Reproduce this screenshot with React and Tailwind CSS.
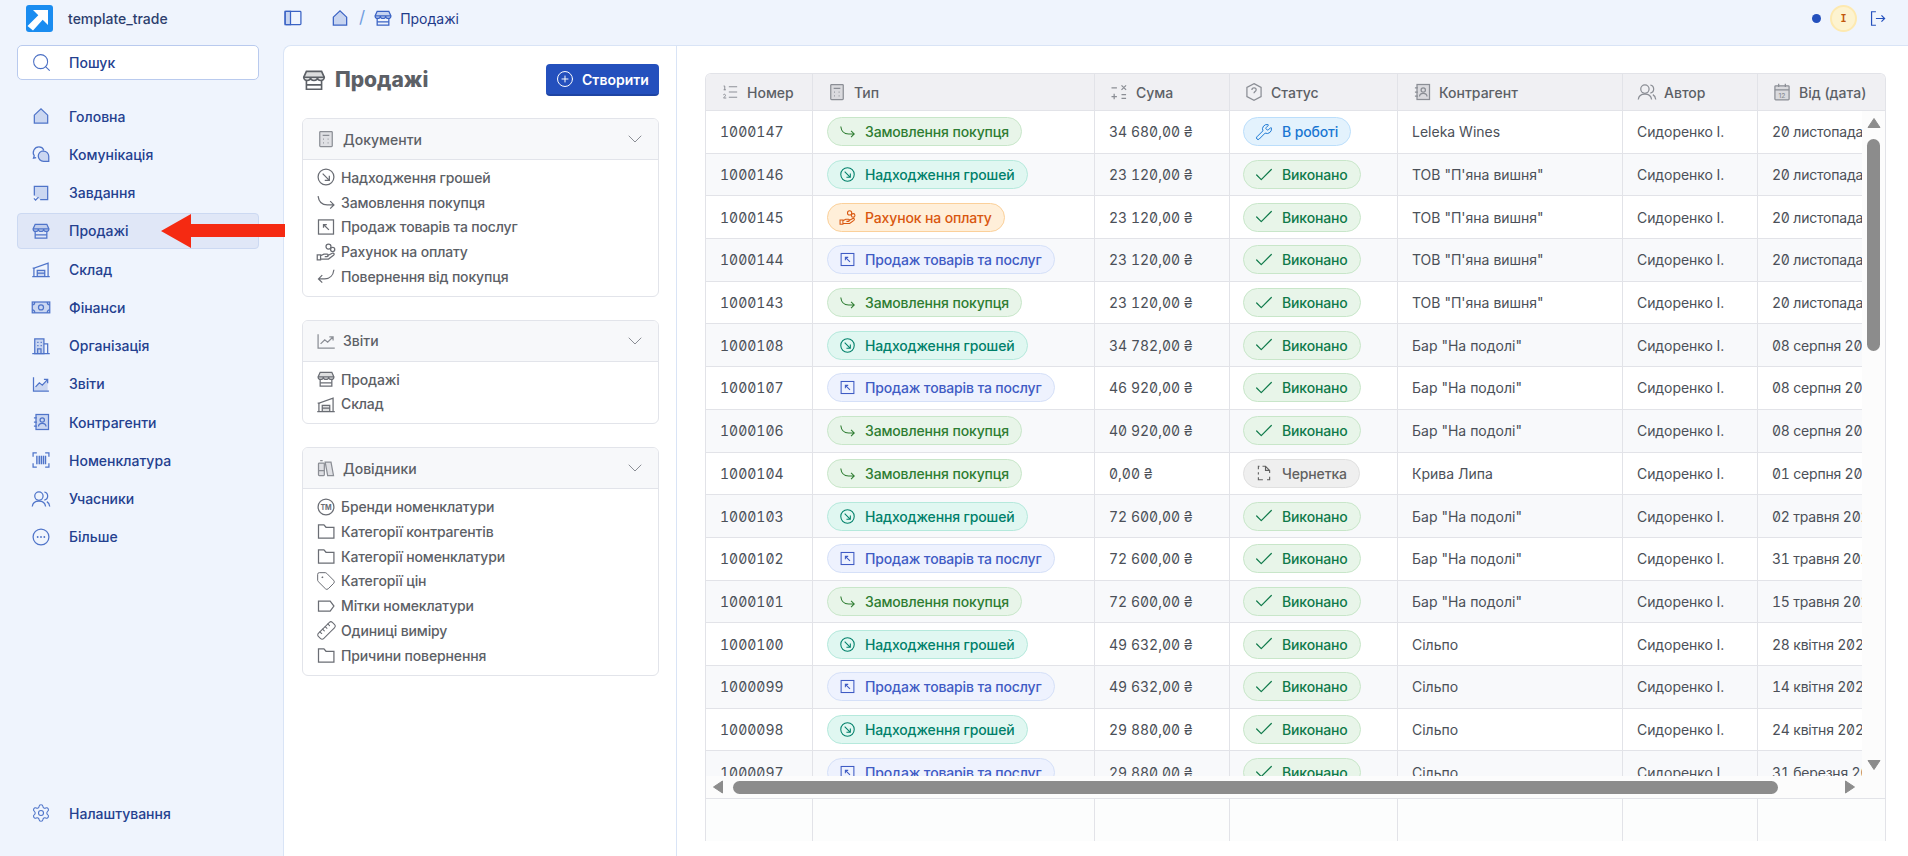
import { Settings, Search, ChevronDown, Check, Wrench, CirclePlus, Tag, Ruler, ListOrdered } from 'lucide-react';

const FONT = "font-['Inter','Noto_Sans',sans-serif]";

// all custom glyphs share one 24 grid, "soft" parts get the duotone fill
const shapes = {
  home: <path className="soft" d="M4 11 12 3.500l8 7.500v9.500H4z" />,
  chat: (
    <>
      <path d="M9.500 3.500a6.800 6.800 0 0 0-5.600 10.600L3 17l3.200-.6" />
      <path className="soft" d="M15 8.500a6.300 6.300 0 0 1 6.300 6.300v6h-6.300a6.300 6.300 0 0 1 0-12.600z" />
      <path d="M9.500 3.500c2.600 0 4.800 1.500 5.800 3.700" />
    </>
  ),
  task: (
    <>
      <path className="soft" d="M4 15V4h16v16h-9" />
      <path d="m3.500 18.500 2 2 3.500-3.500" />
    </>
  ),
  store: (
    <>
      <path d="M5 13v7.500h14V13" />
      <path className="soft" d="M5 4h14l2.500 5.500c0 1.700-1.500 3-3.200 3s-3.100-1.300-3.100-3c0 1.700-1.400 3-3.200 3s-3.200-1.300-3.200-3c0 1.700-1.400 3-3.100 3S2.500 11.200 2.500 9.500z" />
      <path d="M2.500 9.500h19M5 16.500h14" />
    </>
  ),
  warehouse: (
    <>
      <path d="M1.500 21h21M3.500 21v-10l17-6v16M2 11h3" />
      <path className="soft" d="M7.500 21v-7.500h9V21" />
      <path d="M7.500 17h9" />
    </>
  ),
  cash: (
    <>
      <rect className="soft" x="1.500" y="6" width="21" height="13" />
      <circle cx="12" cy="12.500" r="3" />
      <path d="M1.500 9.500c2 0 3-1.500 3-3.500M22.500 9.500c-2 0-3-1.500-3-3.500M1.500 15.500c2 0 3 1.500 3 3.500M22.500 15.500c-2 0-3 1.500-3 3.500" />
    </>
  ),
  building: (
    <>
      <path className="soft" d="M4.500 21V3.500h11V21z" />
      <path d="M15.500 9.500H20V21M1.500 21h21M7.500 7.500h1.500M11.500 7.500H13M7.500 11.500h1.500M11.500 11.500H13M8 21v-5.500h4V21" />
    </>
  ),
  chart: (
    <>
      <path className="soft" strokeOpacity="0" d="m4 16 5-5 3.500 3L20 7v13H4z" />
      <path d="M3 4v16.500h18.500M5.500 15.500 10 10.500l3.500 3L19.500 7M15.500 6.500h4.500V11" />
    </>
  ),
  contacts: (
    <>
      <rect className="soft" x="6" y="3" width="15" height="18" />
      <circle cx="13.500" cy="9.500" r="2.600" />
      <path d="M9 17.500c0-2.800 2-4 4.500-4s4.500 1.200 4.500 4M3.500 7H7M3.500 12H7M3.500 17H7" />
    </>
  ),
  barcode: (
    <>
      <path d="M2.500 8V3.500H7M17 3.500h4.500V8M21.500 16v4.500H17M7 20.500H2.500V16" />
      <path className="soft" strokeOpacity="0" d="M6 7h12v10H6z" />
      <path d="M7 7v10M10 7v10M12.500 7v10M15 7v10M17.500 7v10" />
    </>
  ),
  users: (
    <>
      <circle cx="9.500" cy="8.500" r="5" />
      <path d="M1.500 21c.5-4 3.500-6.500 8-6.500s7.500 2.500 8 6.500M16 3.600a5 5 0 0 1 0 9.800M19 15.200c2 1 3.200 3 3.500 5.800" />
    </>
  ),
  more: (
    <>
      <circle cx="12" cy="12" r="9.500" />
      <path strokeWidth="2.200" strokeLinecap="round" d="M8 12h.01M12 12h.01M16 12h.01" />
    </>
  ),
  panel: (
    <>
      <rect x="2.500" y="4" width="19" height="16" rx="1" />
      <path className="soft" d="M2.500 4H9v16H2.500z" />
    </>
  ),
  logout: <path d="M10 3.500H4.500v17H10M10 12h11M17 8l4 4-4 4" />,
  calculator: (
    <>
      <rect className="soft" x="4.500" y="3" width="15" height="18" rx="1" />
      <path d="M8 7.500h8M8.500 12h1M14 12h1M8.500 16.500h1M14 16.500h1" />
    </>
  ),
  incoming: (
    <>
      <circle cx="12" cy="12" r="9.500" />
      <path d="m8 8 8 8M16 10.500V16h-5.500" />
    </>
  ),
  order: <path d="M2.500 5c.8 6.500 5 10.500 11 10.500H21M17 11l4.500 4.500L17 20" />,
  sale: (
    <>
      <rect x="3" y="3.500" width="18" height="17" />
      <path d="m15.500 15.500-6.500-6.500M9 13V9h4" />
    </>
  ),
  invoice: (
    <>
      <circle cx="15" cy="5.500" r="3" />
      <circle cx="20" cy="9" r="2.500" />
      <path d="M1.500 15.500h4v6h-4zM5.500 16.500l4-2h4c1.600 0 1.600 3 0 3h-3M13.500 16.500l6-3c2-.8 3 1.200 1.500 2.500l-6 4.500H5.500" />
    </>
  ),
  refund: <path d="M21.500 4.500c-.8 6.500-5 11-11 11H3M7.500 11 3 15.500 7.500 20" />,
  chartThin: <path d="M2.500 4v16.500h20M5.500 15.500l5-5 3.500 3L20 7.500M16 7h4.500v4.500" />,
  books: (
    <>
      <rect className="soft" x="3" y="6" width="7" height="15" rx="1" />
      <path className="soft" d="M11 5h7l3 16h-7z" />
      <path d="M3 15h7M5 3h3" />
    </>
  ),
  trademark: (
    <>
      <circle cx="12" cy="12" r="9.500" />
      <text x="12" y="15" fontSize="8.500" textAnchor="middle" fill="currentColor" stroke="none" fontWeight="700" fontFamily="Inter">TM</text>
    </>
  ),
  folder: <path d="M3 20.500V4.500h6.500l2.500 3h9.500v13z" />,
  label: <path d="M3 6h14l4.500 6-4.500 6H3z" />,
  sum: <path d="M3 7h6.500M15 4l5.500 5.500M20.500 4 15 9.500M3 17.500h6.500M6.200 14.200v6.600M15 15h5.500M15 19.500h5.500" />,
  question: (
    <>
      <path d="m12 2 8.500 4.500v11L12 22l-8.500-4.500v-11z" />
      <path d="M9.500 9.500c0-1.500 1.100-2.500 2.600-2.500s2.500 1 2.500 2.300c0 2.200-2.600 2.100-2.600 4.200M12 16.800h.01" />
    </>
  ),
  calendar: (
    <>
      <rect className="soft" x="3.500" y="4.500" width="17" height="17" rx="1" />
      <path d="M3.500 9.500h17M8 2v4M16 2v4" />
      <text x="12" y="19" fontSize="8" textAnchor="middle" fill="currentColor" stroke="none" fontFamily="Inter">12</text>
    </>
  ),
  draft: <path d="M6 3H4.500v4M10 3h4l5.500 5.500V12M19.500 17v4H16M10.500 21H4.500v-3.500M4.500 11v3M14 3v5.500h5.500" />,
};

function Icon({ name, size = 20, className = '' }) {
  return (
    <svg
      width={size}
      height={size}
      viewBox="0 0 24 24"
      fill="none"
      stroke="currentColor"
      strokeWidth="1.500"
      className={`shrink-0 [&_.soft]:fill-current [&_.soft]:[fill-opacity:0.22] ${className}`}
    >
      {shapes[name]}
    </svg>
  );
}

const navItems = [
  ['Головна', 'home'],
  ['Комунікація', 'chat'],
  ['Завдання', 'task'],
  ['Продажі', 'store'],
  ['Склад', 'warehouse'],
  ['Фінанси', 'cash'],
  ['Організація', 'building'],
  ['Звіти', 'chart'],
  ['Контрагенти', 'contacts'],
  ['Номенклатура', 'barcode'],
  ['Учасники', 'users'],
  ['Більше', 'more'],
];

const sections = [
  {
    title: 'Документи',
    icon: 'calculator',
    items: [
      ['Надходження грошей', 'incoming'],
      ['Замовлення покупця', 'order'],
      ['Продаж товарів та послуг', 'sale'],
      ['Рахунок на оплату', 'invoice'],
      ['Повернення від покупця', 'refund'],
    ],
  },
  {
    title: 'Звіти',
    icon: 'chartThin',
    items: [
      ['Продажі', 'store'],
      ['Склад', 'warehouse'],
    ],
  },
  {
    title: 'Довідники',
    icon: 'books',
    items: [
      ['Бренди номенклатури', 'trademark'],
      ['Категорії контрагентів', 'folder'],
      ['Категорії номенклатури', 'folder'],
      ['Категорії цін', 'tag'],
      ['Мітки номеклатури', 'label'],
      ['Одиниці виміру', 'ruler'],
      ['Причини повернення', 'folder'],
    ],
  },
];

const typeStyles = {
  order: { label: 'Замовлення покупця', icon: 'order', cls: 'bg-[#e8f5e9] border-[#c8e6c9] text-[#2e7d32]' },
  income: { label: 'Надходження грошей', icon: 'incoming', cls: 'bg-[#e0f7f1] border-[#b5e9dc] text-[#00806a]' },
  invoice: { label: 'Рахунок на оплату', icon: 'invoice', cls: 'bg-[#ffefd9] border-[#fbd09a] text-[#d9570f]' },
  sale: { label: 'Продаж товарів та послуг', icon: 'sale', cls: 'bg-[#eef2fe] border-[#d5e0f8] text-[#3f5bc4]' },
};

const statusStyles = {
  work: { label: 'В роботі', cls: 'bg-[#e3f2fd] border-[#bbdefb] text-[#1976d2]' },
  done: { label: 'Виконано', cls: 'bg-[#e8f5e9] border-[#c8e6c9] text-[#0f7a4a]' },
  draft: { label: 'Чернетка', cls: 'bg-[#efefef] border-[#e0e0e0] text-[#616161]' },
};

const rows = [
  ['1000147', 'order', '34 680,00 ₴', 'work', 'Leleka Wines', '20 листопада 2025'],
  ['1000146', 'income', '23 120,00 ₴', 'done', 'ТОВ "П\'яна вишня"', '20 листопада 2025'],
  ['1000145', 'invoice', '23 120,00 ₴', 'done', 'ТОВ "П\'яна вишня"', '20 листопада 2025'],
  ['1000144', 'sale', '23 120,00 ₴', 'done', 'ТОВ "П\'яна вишня"', '20 листопада 2025'],
  ['1000143', 'order', '23 120,00 ₴', 'done', 'ТОВ "П\'яна вишня"', '20 листопада 2025'],
  ['1000108', 'income', '34 782,00 ₴', 'done', 'Бар "На подолі"', '08 серпня 2025'],
  ['1000107', 'sale', '46 920,00 ₴', 'done', 'Бар "На подолі"', '08 серпня 2025'],
  ['1000106', 'order', '40 920,00 ₴', 'done', 'Бар "На подолі"', '08 серпня 2025'],
  ['1000104', 'order', '0,00 ₴', 'draft', 'Крива Липа', '01 серпня 2025'],
  ['1000103', 'income', '72 600,00 ₴', 'done', 'Бар "На подолі"', '02 травня 2025'],
  ['1000102', 'sale', '72 600,00 ₴', 'done', 'Бар "На подолі"', '31 травня 2025'],
  ['1000101', 'order', '72 600,00 ₴', 'done', 'Бар "На подолі"', '15 травня 2025'],
  ['1000100', 'income', '49 632,00 ₴', 'done', 'Сільпо', '28 квітня 2025'],
  ['1000099', 'sale', '49 632,00 ₴', 'done', 'Сільпо', '14 квітня 2025'],
  ['1000098', 'income', '29 880,00 ₴', 'done', 'Сільпо', '24 квітня 2025'],
  ['1000097', 'sale', '29 880,00 ₴', 'done', 'Сільпо', '31 березня 2025'],
];

const columns = [
  ['Номер', <ListOrdered key="n" size={18} strokeWidth={1.3} className="shrink-0 mx-px" />],
  ['Тип', <Icon key="t" name="calculator" />],
  ['Сума', <Icon key="s" name="sum" />],
  ['Статус', <Icon key="st" name="question" />],
  ['Контрагент', <Icon key="c" name="contacts" />],
  ['Автор', <Icon key="a" name="users" />],
  ['Від (дата)', <Icon key="d" name="calendar" />],
];

const gridCols = 'grid grid-cols-[106px_282px_135px_168px_225px_135px_1fr]';

function SectionIcon({ name }) {
  if (name === 'tag') return <Tag size={20} strokeWidth={1.200} className="shrink-0" />;
  if (name === 'ruler') return <Ruler size={21} strokeWidth={1.200} className="shrink-0 -scale-x-100" />;
  return <Icon name={name} />;
}

function Sidebar() {
  return (
    <aside className="w-[283px] shrink-0 flex flex-col pl-[17px] pr-[24px] pb-[25px]">
      <div className="h-[35px] flex items-center bg-white border border-[#b9caee] rounded-[5px] pl-[13px] gap-[17px] text-[#24408f]">
        <Search size={21} strokeWidth={1.200} className="text-[#4a6fc4]" />
        <span className="text-[14px] font-[550]">Пошук</span>
      </div>
      <nav className="mt-[18px] flex flex-col gap-[2.250px]">
        {navItems.map(([label, icon]) => (
          <div
            key={label}
            className={`h-[36px] flex items-center gap-[18px] rounded-[4px] text-[14px] font-[550] text-[#24408f] ${
              label === 'Продажі' ? 'bg-[#e0e7f7] border border-[#ccd9f2] pl-[13px]' : 'pl-[14px]'
            }`}
          >
            <Icon name={icon} className="text-[#4f74c9]" />
            <span>{label}</span>
          </div>
        ))}
      </nav>
      <div className="mt-auto h-[36px] flex items-center pl-[14px] gap-[18px] text-[14px] font-[550] text-[#24408f]">
        <Settings size={20} strokeWidth={1.300} className="text-[#4f74c9]" />
        <span>Налаштування</span>
      </div>
    </aside>
  );
}

function Section({ section }) {
  return (
    <section className="border border-[#e2e4ea] rounded-[6px] overflow-hidden">
      <header className="h-[41px] flex items-center bg-[#f7f8fa] border-b border-[#e2e4ea] pl-[14px] pr-[11px] gap-[8px] text-[14px] font-[550] text-[#5c6066]">
        <div className="w-[18px] flex justify-center text-[#8b8e95]">
          <Icon name={section.icon} />
        </div>
        <span>{section.title}</span>
        <ChevronDown size={24} strokeWidth={1} className="ml-auto text-[#8b8e95]" />
      </header>
      <ul className="pt-[5px] pb-[7px] pl-[14px]">
        {section.items.map(([label, icon]) => (
          <li key={label} className="h-[24.750px] flex items-center gap-[6px] text-[14px] font-[550] tracking-[-0.01em] text-[#5c6066]">
            <div className="w-[18px] flex justify-center text-[#6a6d74]">
              <SectionIcon name={icon} />
            </div>
            <span>{label}</span>
          </li>
        ))}
      </ul>
    </section>
  );
}

function Badge({ cls, icon, label }) {
  return (
    <span className={`inline-flex items-center h-[29px] rounded-full border pl-[11px] pr-[12px] gap-[9px] text-[14px] font-[550] tracking-[-0.01em] whitespace-nowrap ${cls}`}>
      {icon}
      {label}
    </span>
  );
}

function Triangle({ dir }) {
  const points = {
    up: '7,1.500 13,10.500 1,10.500',
    down: '1,1.500 13,1.500 7,10.500',
    left: '10.500,1 10.500,13 1.500,7',
    right: '1.500,1 1.500,13 10.500,7',
  }[dir];
  const wide = dir === 'up' || dir === 'down';
  return (
    <svg width={wide ? 14 : 12} height={wide ? 12 : 14} className="shrink-0 text-[#8c8c8c]">
      <polygon points={points} fill="currentColor" stroke="currentColor" strokeLinejoin="round" />
    </svg>
  );
}

function Table() {
  return (
    <div className="w-[1181px] border-x border-t border-[#e2e3e8] rounded-t-[6px] overflow-hidden text-[14px] text-[#4b5058]">
      <div className={`${gridCols} h-[37px] bg-[#f0f0f3] border-b border-[#e2e3e8]`}>
        {columns.map(([label, icon], i) => (
          <div key={label} className={`flex items-center pl-[14px] gap-[7px] font-[550] text-[#5c6066] [&_svg]:text-[#8b8e95] ${i ? 'border-l border-[#e2e3e8]' : ''}`}>
            {icon}
            <span className="whitespace-nowrap">{label}</span>
          </div>
        ))}
      </div>
      <div className="flex h-[665px]">
        <div className="flex-1 min-w-0 overflow-hidden">
          {rows.map(([num, type, sum, status, customer, date], i) => {
            const t = typeStyles[type];
            const s = statusStyles[status];
            return (
              <div key={num} className={`${gridCols} h-[42.700px] border-b border-[#e2e3e8] ${i % 2 ? 'bg-[#f8f9fb]' : 'bg-white'}`}>
                <div className="flex items-center pl-[14px] tabular-nums slashed-zero">{num}</div>
                <div className="flex items-center pl-[14px] border-l border-[#e2e3e8]">
                  <Badge cls={t.cls} label={t.label} icon={<Icon name={t.icon} size={17} />} />
                </div>
                <div className="flex items-center pl-[14px] border-l border-[#e2e3e8] tabular-nums slashed-zero whitespace-nowrap">{sum}</div>
                <div className="flex items-center pl-[13px] border-l border-[#e2e3e8]">
                  <Badge
                    cls={s.cls}
                    label={s.label}
                    icon={
                      status === 'work' ? <Wrench size={18} strokeWidth={1.300} /> :
                      status === 'done' ? <Check size={22} strokeWidth={1.300} className="-mx-[2px]" /> :
                      <Icon name="draft" size={18} />
                    }
                  />
                </div>
                <div className="flex items-center pl-[14px] border-l border-[#e2e3e8] whitespace-nowrap">{customer}</div>
                <div className="flex items-center pl-[14px] border-l border-[#e2e3e8] whitespace-nowrap tracking-[-0.005em]">Сидоренко І.</div>
                <div className="flex items-center pl-[14px] border-l border-[#e2e3e8] whitespace-nowrap tabular-nums slashed-zero tracking-[-0.015em]">{date}</div>
              </div>
            );
          })}
        </div>
        <div className="w-[23px] shrink-0 bg-[#fcfcfc] flex flex-col items-center pt-[6px] pb-[5px]">
          <Triangle dir="up" />
          <div className="mt-[10px] w-[13px] h-[212px] rounded-full bg-[#8c8c8c]" />
          <div className="mt-auto">
            <Triangle dir="down" />
          </div>
        </div>
      </div>
      <div className="h-[23px] flex items-center bg-[#fcfcfc] border-b border-[#e2e3e8] pl-[6px] pr-[29px]">
        <Triangle dir="left" />
        <div className="ml-[9px] w-[1045px] h-[13px] rounded-full bg-[#8c8c8c]" />
        <div className="ml-auto">
          <Triangle dir="right" />
        </div>
      </div>
      <div className={`${gridCols} h-[42px] bg-[#fcfdfd]`}>
        {columns.map(([label], i) => (
          <div key={label} className={i ? 'border-l border-[#e2e3e8]' : ''} />
        ))}
      </div>
    </div>
  );
}

export default function App() {
  return (
    <div className={`relative h-[856px] overflow-hidden flex flex-col bg-[#eff4fd] ${FONT}`}>
      <div className="h-[45px] shrink-0 flex items-center pb-[9px]">
        <div className="w-[283px] shrink-0 flex items-center pl-[26px] gap-[15px]">
          <svg width="27" height="27" viewBox="0 0 27 27" className="shrink-0">
            <rect width="27" height="27" rx="3" fill="#1a8cf0" />
            <path fill="#fff" d="M7 5h15v15l-5.300-5.300L7 25.500 1.500 21l10.800-10.800z" />
          </svg>
          <span className="text-[14px] font-[550] text-[#2c3e6e]">template_trade</span>
        </div>
        <Icon name="panel" className="text-[#3a62c4]" />
        <Icon name="home" className="ml-[27px] text-[#3a62c4]" />
        <span className="ml-[9px] text-[17px] text-[#6f9de0]">/</span>
        <Icon name="store" className="ml-[8px] text-[#3a62c4]" />
        <span className="ml-[7px] text-[14px] text-[#1e3a8a]">Продажі</span>
        <div className="ml-auto flex items-center pr-[21px]">
          <span className="w-[9px] h-[9px] rounded-full bg-[#2450bd]" />
          <span className="ml-[9px] w-[27px] h-[27px] rounded-full bg-[#fdf3d0] border-2 border-[#fde9b0] flex items-center justify-center font-['DejaVu_Sans_Mono',monospace] text-[10px] font-bold text-[#c2570c]">I</span>
          <Icon name="logout" size={19} className="ml-[11px] text-[#2450bd]" />
        </div>
      </div>
      <div className="flex-1 min-h-0 flex">
        <Sidebar />
        <main className="flex-1 min-w-0 flex bg-white border-l border-t border-[#d9e4f6] rounded-tl-[8px]">
          <div className="w-[393px] shrink-0 border-r border-[#d9e4f6] pl-[18px] pr-[17px] pt-[18px]">
            <div className="h-[32px] flex items-center">
              <Icon name="store" size={26} className="-ml-px text-[#5c6066]" />
              <h1 className="ml-[8px] text-[21px] font-extrabold text-[#5c6066]">Продажі</h1>
              <button className="ml-auto w-[113px] h-[32px] flex items-center justify-center gap-[8px] rounded-[4px] bg-[#2450bd] border-b-2 border-[#1e44a3] text-[14px] font-semibold text-white">
                <CirclePlus size={18} strokeWidth={1.300} />
                Створити
              </button>
            </div>
            <div className="mt-[22px] flex flex-col gap-[23px]">
              {sections.map((section) => (
                <Section key={section.title} section={section} />
              ))}
            </div>
          </div>
          <div className="flex-1 min-w-0 pl-[28px] pt-[27px]">
            <Table />
          </div>
        </main>
      </div>
      {/* red annotation arrow sits on top of the sidebar */}
      <svg width="124" height="36" viewBox="0 0 124 36" className="absolute left-[161px] top-[213px]">
        <path fill="#f52a12" d="M0 18 30 1v10h94v13H30v11z" />
      </svg>
    </div>
  );
}
